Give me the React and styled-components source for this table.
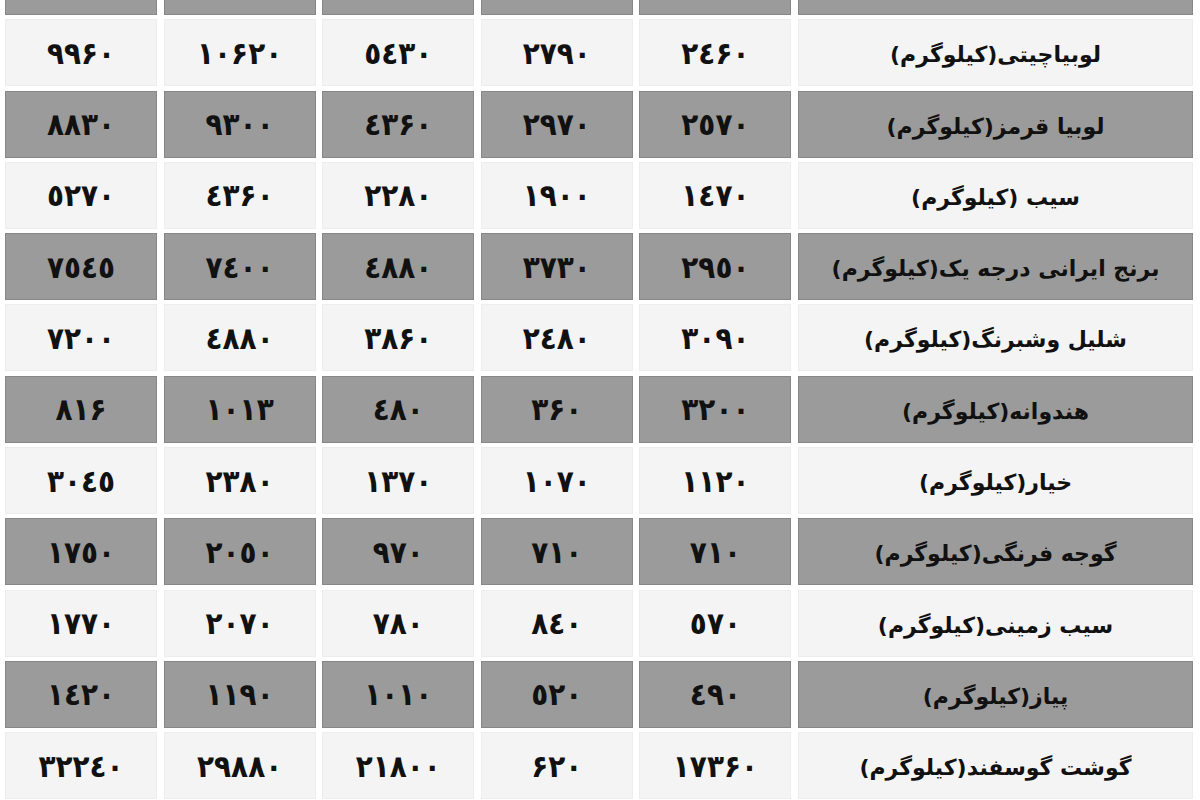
import styled, { createGlobalStyle } from 'styled-components'

const GlobalStyle = createGlobalStyle`
  html, body {
    margin: 0;
    padding: 0;
    background: #ffffff;
    overflow: hidden;
  }
  body {
    font-family: 'DejaVu Sans', 'Noto Sans', sans-serif;
  }
`

/* digit shapes in the picture: Arabic 4/5, Persian 6 */
const DIGITS = ['٠', '١', '٢', '٣', '٤', '٥', '۶', '٧', '٨', '٩']
const fa = (n) => String(n).replace(/\d/g, (d) => DIGITS[d])

const rows = [
  { name: '', values: ['', '', '', '', ''] },
  { name: 'لوبیاچیتی(کیلوگرم)', values: [2460, 2790, 5430, 10620, 9960] },
  { name: 'لوبیا قرمز(کیلوگرم)', values: [2570, 2970, 4360, 9300, 8830] },
  { name: 'سیب  (کیلوگرم)', values: [1470, 1900, 2280, 4360, 5270] },
  { name: 'برنج ایرانی درجه یک(کیلوگرم)', values: [2950, 3730, 4880, 7400, 7545] },
  { name: 'شلیل وشبرنگ(کیلوگرم)', values: [3090, 2480, 3860, 4880, 7200] },
  { name: 'هندوانه(کیلوگرم)', values: [3200, 360, 480, 1013, 816] },
  { name: 'خیار(کیلوگرم)', values: [1120, 1070, 1370, 2380, 3045] },
  { name: 'گوجه فرنگی(کیلوگرم)', values: [710, 710, 970, 2050, 1750] },
  { name: 'سیب زمینی(کیلوگرم)', values: [570, 840, 780, 2070, 1770] },
  { name: 'پیاز(کیلوگرم)', values: [490, 520, 1010, 1190, 1420] },
  { name: 'گوشت گوسفند(کیلوگرم)', values: [17360, 620, 21800, 29880, 32240] },
]

const Table = styled.div`
  direction: rtl;
  display: grid;
  grid-template-columns: 395px repeat(5, 152px);
  grid-auto-rows: 67px;
  column-gap: 6.6px;
  row-gap: 4.3px;
  padding: 0 7px 0 5px;
  margin-top: -52px;
  width: 1200px;
  box-sizing: border-box;
`

const Cell = styled.div`
  display: flex;
  align-items: center;
  justify-content: center;
  box-sizing: border-box;
  background: ${(p) => (p.$shaded ? '#9b9b9b' : '#f4f4f4')};
  border: 1px solid ${(p) => (p.$shaded ? '#878787' : '#ededed')};
  color: #111111;
  font-weight: bold;
  white-space: nowrap;
`

const Name = styled(Cell)`
  font-size: 22px;
  padding-top: 4px;
`

const Value = styled(Cell)`
  direction: ltr;
  font-family: 'DejaVu Sans Condensed', 'DejaVu Sans', sans-serif;
  font-stretch: condensed;
  font-size: 31px;
`

export default function App() {
  return (
    <>
      <GlobalStyle />
      <Table>
        {rows.map((row, i) => {
          const shaded = i % 2 === 0
          return [
            <Name key={`n${i}`} $shaded={shaded}>{row.name}</Name>,
            ...row.values.map((v, j) => (
              <Value key={`v${i}-${j}`} $shaded={shaded}>{v === '' ? '' : fa(v)}</Value>
            )),
          ]
        })}
      </Table>
    </>
  )
}
